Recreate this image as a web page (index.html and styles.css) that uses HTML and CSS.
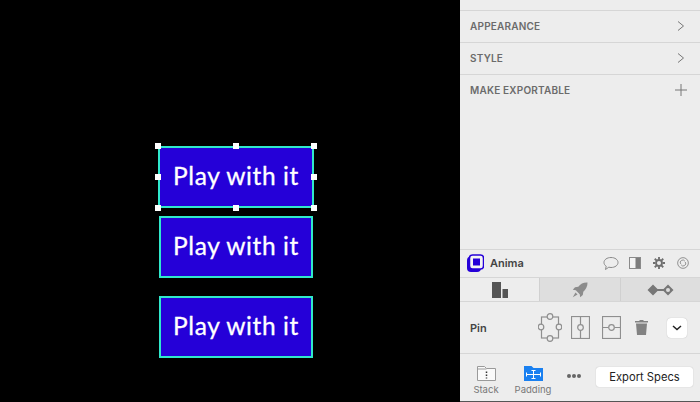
FILE: index.html
```html
<!DOCTYPE html>
<html lang="en">
<head>
  <meta charset="UTF-8">
  <meta name="viewport" content="width=device-width, initial-scale=1.0">
  <title>Play with it</title>
  <link rel="stylesheet" href="styles.css">
</head>
<body>
  <!-- Canvas -->
  <main class="canvas">
    <div class="play-btn selected">
      Play with it
      <i class="handle h-tl"></i><i class="handle h-tc"></i><i class="handle h-tr"></i>
      <i class="handle h-ml"></i><i class="handle h-mr"></i>
      <i class="handle h-bl"></i><i class="handle h-bc"></i><i class="handle h-br"></i>
    </div>
    <div class="play-btn">Play with it</div>
    <div class="play-btn third">Play with it</div>
  </main>

  <!-- Inspector -->
  <aside class="panel">
    <div class="top-gap"></div>
    <div class="section-row">
      <span>APPEARANCE</span>
      <svg width="10" height="12" viewBox="0 0 10 12"><path d="M2 1.500l5.500 4.500L2 10.500" class="line-icon"/></svg>
    </div>
    <div class="section-row">
      <span>STYLE</span>
      <svg width="10" height="12" viewBox="0 0 10 12"><path d="M2 1.500l5.500 4.500L2 10.500" class="line-icon"/></svg>
    </div>
    <div class="section-row export-row">
      <span>MAKE EXPORTABLE</span>
      <svg width="12" height="12" viewBox="0 0 12 12"><path d="M6 0v12M0 6h12" class="line-icon"/></svg>
    </div>

    <div class="spacer"></div>

    <div class="anima-head">
      <svg class="anima-logo" width="17" height="18" viewBox="0 0 17 18">
        <rect x="0" y="2.500" width="14" height="15.500" rx="4" fill="#2500d8"/>
        <rect x="2.500" y="1" width="14" height="14" rx="3" fill="#f4f4f4" stroke="#2500d8" stroke-width="1.500"/>
        <rect x="6" y="4.500" width="7" height="7" fill="#2500d8"/>
      </svg>
      <strong>Anima</strong>
      <div class="head-icons">
        <svg class="speech" width="16" height="15" viewBox="0 0 16 15"><path d="M8 1.500c4 0 7 2.200 7 5s-3 5-7 5c-.8 0-1.500-.1-2.200-.3L2.500 13.500l.7-3.300C1.800 9.300 1 8 1 6.500c0-2.800 3-5 7-5z" class="thin-icon"/></svg>
        <svg width="12" height="12" viewBox="0 0 12 12"><rect x=".5" y=".5" width="11" height="11" fill="#f4f4f4" stroke="#8a8a8a"/><rect x="6.500" y="1" width="4.500" height="10" fill="#7d7d7d"/></svg>
        <svg width="12" height="12" viewBox="0 0 13 13"><circle cx="6.500" cy="6.500" r="3.200" fill="none" stroke="#6f6f6f" stroke-width="2"/><path d="M6.500 0v2.500M6.500 10.500V13M0 6.500h2.500M10.500 6.500H13M1.900 1.900l1.800 1.800M9.300 9.300l1.800 1.800M11.100 1.900L9.300 3.700M3.700 9.300l-1.800 1.800" stroke="#6f6f6f" stroke-width="2"/></svg>
        <svg width="12" height="12" viewBox="0 0 13 13"><circle cx="6.500" cy="6.500" r="5.800" class="thin-icon"/><path d="M4 7.500a2.700 2.700 0 0 1 4.500-3M9 5.500a2.700 2.700 0 0 1-4.500 3" class="thin-icon"/></svg>
      </div>
    </div>

    <div class="tabs">
      <div class="tab active">
        <svg width="16" height="16" viewBox="0 0 16 16"><rect x="0" y="0" width="9" height="16" fill="#555"/><rect x="10.500" y="7" width="5.500" height="9" fill="#555"/></svg>
      </div>
      <div class="tab">
        <svg width="16" height="16" viewBox="0 0 16 16"><path d="M15.500.5c-4-.2-7 1.300-9.200 4.200L3 5.200.8 7.800l3 .5 3.900 3.900.5 3 2.600-2.200.5-3.300C13.700 7.500 15.700 4.500 15.500.5z" fill="#8c8c8c"/><path d="M3.500 10.500L.8 15.200l4.700-2.700z" fill="#8c8c8c"/></svg>
      </div>
      <div class="tab">
        <svg width="27" height="12" viewBox="0 0 27 12"><path d="M6 .5L11.500 6 6 11.500.5 6zM21 .5L26.500 6 21 11.500 15.500 6z" fill="#777"/><circle cx="21" cy="6" r="2" fill="#ddd"/><path d="M10 5h7v2h-7z" fill="#777"/></svg>
      </div>
    </div>

    <div class="pin-row">
      <strong>Pin</strong>
      <svg class="pin-icon-a" width="24" height="29" viewBox="0 0 24 29">
        <rect x="3.500" y="4" width="17" height="21" class="pin-icon"/>
        <circle cx="12" cy="3.500" r="2.800" class="pin-dot"/><circle cx="12" cy="25.500" r="2.800" class="pin-dot"/>
        <circle cx="3" cy="14" r="2.800" class="pin-dot"/><circle cx="21" cy="14" r="2.800" class="pin-dot"/>
      </svg>
      <svg class="pin-icon-b" width="19" height="23" viewBox="0 0 19 23">
        <rect x=".5" y=".5" width="18" height="22" class="pin-icon"/>
        <path d="M9.500 1v7.500M9.500 14.500V22" class="pin-icon"/><circle cx="9.500" cy="11.500" r="2.800" class="pin-dot"/>
      </svg>
      <svg class="pin-icon-c" width="19" height="23" viewBox="0 0 19 23">
        <rect x=".5" y=".5" width="18" height="22" class="pin-icon"/>
        <path d="M1 11.500h5.500M12.500 11.500H18" class="pin-icon"/><circle cx="9.500" cy="11.500" r="2.800" class="pin-dot"/>
      </svg>
      <svg class="trash" width="13" height="15" viewBox="0 0 13 15"><path d="M4.500 0h4v1H13v1.500H0V1h4.500zM1 3.500h11l-1 11.500H2z" fill="#828282"/></svg>
      <div class="drop-btn">
        <svg width="10" height="6" viewBox="0 0 10 6"><path d="M1 1l4 3.500L9 1" fill="none" stroke="#222" stroke-width="1.500"/></svg>
      </div>
    </div>

    <div class="bottom-bar">
      <div class="tool">
        <svg width="19" height="15" viewBox="0 0 19 15"><path d="M.5 14.500V.5h7l2 2h9v12z" fill="#fafafa" stroke="#9a9a9a"/><path d="M.5 3h9" stroke="#9a9a9a"/><path d="M9.500 5.500v1.600M9.500 8.500v1.600M9.500 11.500v1" stroke="#333" stroke-width="1.500"/></svg>
        <span>Stack</span>
      </div>
      <div class="tool">
        <svg width="19" height="15" viewBox="0 0 19 15"><path d="M0 15V0h7.500l2 2H19v13z" fill="#1a80f0"/><path d="M2 8.500h15M9.500 4.500v8M2.500 6.500v4M16.500 6.500v4M7.500 4.500h4M7.500 12.500h4" stroke="#fff"/></svg>
        <span>Padding</span>
      </div>
      <div class="dots"><i></i><i></i><i></i></div>
      <button class="export-btn">Export Specs</button>
    </div>
  </aside>
</body>
</html>
```

FILE: styles.css
```css
* {
  box-sizing: border-box;
}

html, body {
  height: 100%;
}

body {
  font-family: Inter, "Liberation Sans", sans-serif;
  margin: 0;
  background-color: #000;
  display: flex;
  overflow: hidden;
}

.canvas {
  width: 460px;
  padding: 146px 0 0 159px;
  display: flex;
  flex-direction: column;
  align-items: flex-start;
  gap: 8px;
}

.play-btn {
  position: relative;
  width: 154px;
  height: 62px;
  background-color: #2500d8;
  border: 2px solid #30e8cc;
  color: #fff;
  font-family: Lato, sans-serif;
  font-size: 24.500px;
  font-weight: 400;
  letter-spacing: 0.6px;
  -webkit-text-stroke: 0.3px #fff;
  display: flex;
  align-items: center;
  justify-content: center;
  padding-bottom: 3px;
}

.play-btn.selected {
  width: 156px;
  margin-left: -1px;
}

.play-btn.third {
  margin-top: 10px;
}

.handle {
  position: absolute;
  width: 6px;
  height: 6px;
  background-color: #fff;
}

.h-tl { left: -5px; top: -5px; }
.h-tc { left: 73px; top: -5px; }
.h-tr { right: -5px; top: -5px; }
.h-ml { left: -5px; top: 26px; }
.h-mr { right: -5px; top: 26px; }
.h-bl { left: -5px; bottom: -5px; }
.h-bc { left: 73px; bottom: -5px; }
.h-br { right: -5px; bottom: -5px; }

.panel {
  width: 240px;
  height: 402px;
  background-color: #ededed;
  border-bottom: 1px solid #555;
  display: flex;
  flex-direction: column;
}

.top-gap {
  height: 11px;
  border-bottom: 1px solid #d6d6d6;
}

.section-row {
  height: 32px;
  padding: 0 14px 2px 10px;
  border-bottom: 1px solid #d6d6d6;
  display: flex;
  align-items: center;
  justify-content: space-between;
  font-size: 10px;
  font-weight: 600;
  letter-spacing: 0.2px;
  color: #6b6b6b;
}

.export-row {
  border-bottom: none;
  padding-right: 13px;
}

.line-icon {
  fill: none;
  stroke: #777;
  stroke-width: 1;
}

.thin-icon {
  fill: none;
  stroke: #8a8a8a;
  stroke-width: 1;
}

.spacer {
  flex: 1;
}

.anima-head {
  height: 28px;
  padding: 0 11px 1px 7px;
  border-top: 1px solid #d6d6d6;
  display: flex;
  align-items: center;
  font-size: 11px;
  color: #444;
}

.anima-head strong {
  margin-left: 6px;
  font-weight: 600;
}

.head-icons {
  margin-left: auto;
  display: flex;
  align-items: center;
  gap: 12px;
}

.speech {
  margin-right: -2px;
}

.tabs {
  height: 25px;
  display: flex;
  border-top: 1px solid #d6d6d6;
  border-bottom: 1px solid #d6d6d6;
}

.tab {
  flex: 1;
  background-color: #dedede;
  border-left: 1px solid #d0d0d0;
  display: flex;
  align-items: center;
  justify-content: center;
}

.tab.active {
  background-color: #ededed;
  border-left: none;
}

.pin-row {
  height: 52px;
  padding: 0 13px 0 10px;
  border-bottom: 1px solid #d6d6d6;
  display: flex;
  align-items: center;
  font-size: 11px;
  color: #444;
}

.pin-row strong {
  font-weight: 600;
  width: 68px;
}

.pin-icon {
  fill: none;
  stroke: #8f8f8f;
  stroke-width: 1.200;
}

.pin-dot {
  fill: #ededed;
  stroke: #8f8f8f;
  stroke-width: 1.200;
}

.pin-icon-b {
  margin-left: 9px;
}

.pin-icon-c {
  margin-left: 12px;
}

.trash {
  margin-left: 14px;
}

.drop-btn {
  width: 20px;
  height: 20px;
  margin-left: auto;
  background-color: #fff;
  border-radius: 4px;
  box-shadow: 0 0 1px rgba(0, 0, 0, 0.3);
  display: flex;
  align-items: center;
  justify-content: center;
}

.bottom-bar {
  height: 47px;
  padding: 12px 7px 0 8px;
  display: flex;
  align-items: flex-start;
}

.tool {
  width: 36px;
  display: flex;
  flex-direction: column;
  align-items: center;
  gap: 3px;
  font-size: 9.500px;
  color: #777;
}

.tool + .tool {
  margin-left: 11px;
}

.dots {
  margin: 8px 0 0 16px;
  display: flex;
  gap: 1px;
}

.dots i {
  width: 4px;
  height: 4px;
  border-radius: 50%;
  background-color: #666;
}

.export-btn {
  margin-left: auto;
  margin-top: 1px;
  width: 97px;
  height: 20px;
  padding: 0;
  border: none;
  border-radius: 3px;
  background-color: #fff;
  box-shadow: 0 0 1px rgba(0, 0, 0, 0.3);
  font-family: Inter, "Liberation Sans", sans-serif;
  font-size: 11.200px;
  color: #222;
}
```
